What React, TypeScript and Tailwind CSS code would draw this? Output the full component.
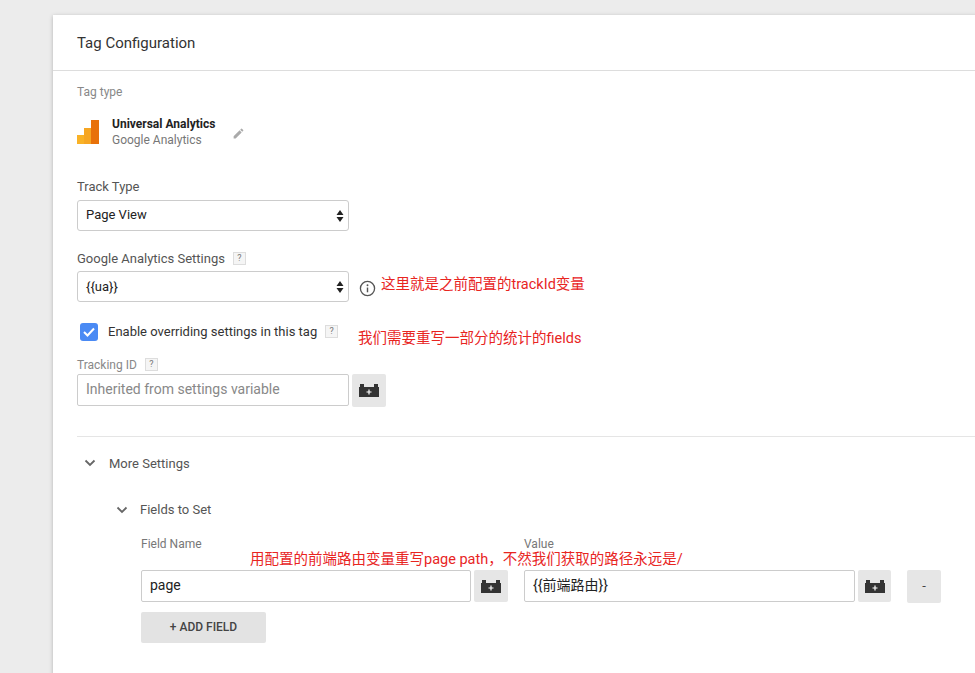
import React from "react";

const Q = () => (
  <span className="inline-flex items-center justify-center w-[13px] h-[13px] border border-[#ddd] bg-[#f5f5f5] text-[9px] leading-none text-[#777] ml-[8px]">?</span>
);

const Brick = ({ cls }: { cls: string }) => (
  <div className={"flex items-center justify-center bg-[#e6e6e6] rounded-[2px] " + cls}>
    <svg width="20" height="14" viewBox="0 0 20 14">
      <rect x="1" y="1" width="4" height="3" fill="#333" />
      <rect x="15" y="1" width="4" height="3" fill="#333" />
      <rect x="0" y="4" width="20" height="10" fill="#333" />
      <path d="M10 6.5v5M7.5 9h5" stroke="#fff" strokeWidth="1.2" />
    </svg>
  </div>
);

const Arrows = () => (
  <svg width="8" height="14" viewBox="0 0 8 14" className="absolute right-[4px] top-[8px]">
    <path d="M4 1L7.5 6H0.5Z M4 13L7.5 8H0.5Z" fill="#222" />
  </svg>
);

const Chevron = () => (
  <svg width="12" height="8" viewBox="0 0 12 8"><path d="M1.5 1.5L6 6l4.5-4.5" stroke="#666" strokeWidth="1.8" fill="none" /></svg>
);

export default function App() {
  return (
    <div className="w-[975px] h-[673px] overflow-hidden bg-[#ececec] relative" style={{ fontFamily: "Roboto, 'Noto Sans CJK SC', sans-serif" }}>
      <div className="absolute left-[53px] top-[15px] w-[960px] h-[700px] bg-white shadow-[0_1px_4px_rgba(0,0,0,0.25)]">
        <div className="h-[56px] border-b border-[#ddd] pl-[24px] pt-[17px] text-[15px] text-[#333]">Tag Configuration</div>
        <div className="pl-[24px]">
          <div className="pt-[12px] text-[12px] text-[#888]">Tag type</div>
          <div className="flex items-center mt-[15px]">
            <svg width="22" height="24" viewBox="0 0 22 24">
              <rect x="0" y="15" width="8" height="9" fill="#f9b227" />
              <rect x="7" y="8" width="8" height="16" fill="#f6a623" />
              <rect x="14" y="0" width="8" height="24" fill="#e8710a" />
            </svg>
            <div className="ml-[13px] leading-[16px]">
              <div className="text-[12px] font-bold text-[#222]">Universal Analytics</div>
              <div className="text-[12px] text-[#777]">Google Analytics</div>
            </div>
            <svg width="13" height="13" viewBox="0 0 24 24" className="ml-[17px] mt-[3px]">
              <path d="M3 17.25V21h3.75L17.81 9.94l-3.75-3.75L3 17.25zM20.71 7.04a1 1 0 000-1.41l-2.34-2.34a1 1 0 00-1.41 0l-1.83 1.83 3.75 3.75 1.83-1.83z" fill="#aaa" />
            </svg>
          </div>
          <div className="mt-[29px] text-[13px] text-[#555]">Track Type</div>
          <div className="relative mt-[3px] w-[272px] h-[31px] border border-[#ccc] rounded-[3px] pl-[8px] flex items-center text-[13px] text-[#222]">Page View<Arrows /></div>
          <div className="mt-[18px] text-[13px] text-[#555] flex items-center">Google Analytics Settings<Q /></div>
          <div className="flex items-center mt-[3px]">
            <div className="relative w-[272px] h-[31px] border border-[#ccc] rounded-[3px] pl-[8px] flex items-center text-[13px] text-[#222]">{"{{ua}}"}<Arrows /></div>
            <svg width="17" height="17" viewBox="0 0 18 18" className="ml-[10px] mt-[3px]">
              <circle cx="9" cy="9" r="7.5" stroke="#555" strokeWidth="1.4" fill="none" />
              <circle cx="9" cy="5.5" r="1" fill="#555" />
              <path d="M9 8v5" stroke="#555" strokeWidth="1.5" />
            </svg>
          </div>
          <div className="flex items-center mt-[20px] ml-[3px]">
            <div className="w-[18px] h-[18px] rounded-[3px] bg-[#4a8af4] flex items-center justify-center">
              <svg width="12" height="10" viewBox="0 0 12 10"><path d="M1 5l3.5 3.5L11 1.5" stroke="#fff" strokeWidth="2" fill="none" /></svg>
            </div>
            <span className="ml-[10px] text-[13px] text-[#333]">Enable overriding settings in this tag</span><Q />
          </div>
          <div className="mt-[14px] text-[12px] text-[#888] flex items-center">Tracking ID<Q /></div>
          <div className="flex mt-0">
            <div className="w-[272px] h-[32px] border border-[#ccc] rounded-[2px] pl-[8px] flex items-center text-[14px] text-[#888]">Inherited from settings variable</div>
            <Brick cls="ml-[3px] w-[34px] h-[33px]" />
          </div>
          <div className="mt-[29px] border-t border-[#e5e5e5]" />
          <div className="flex items-center mt-[17px] ml-[7px]"><Chevron /><span className="ml-[13px] text-[13px] text-[#555]">More Settings</span></div>
          <div className="flex items-center mt-[27px] ml-[39px]"><Chevron /><span className="ml-[12px] text-[13px] text-[#555]">Fields to Set</span></div>
          <div className="flex mt-[15px] ml-[64px] text-[12px] text-[#777]">
            <span className="w-[383px]">Field Name</span><span>Value</span>
          </div>
          <div className="flex mt-[17px] ml-[64px]">
            <div className="w-[330px] h-[32px] border border-[#ccc] rounded-[2px] pl-[8px] flex items-center text-[14px] text-[#222]">page</div>
            <Brick cls="ml-[3px] w-[34px] h-[32px]" />
            <div className="ml-[16px] w-[331px] h-[32px] border border-[#ccc] rounded-[2px] pl-[8px] flex items-center text-[14px] text-[#222]">{"{{前端路由}}"}</div>
            <Brick cls="ml-[3px] w-[33px] h-[32px]" />
            <div className="ml-[16px] w-[34px] h-[33px] bg-[#e6e6e6] rounded-[2px] flex items-center justify-center text-[13px] text-[#444]">-</div>
          </div>
          <div className="mt-[9px] ml-[64px] w-[125px] h-[31px] bg-[#e3e3e3] rounded-[2px] flex items-center justify-center text-[12px] font-medium text-[#444]">+ ADD FIELD</div>
        </div>
      </div>
      <div className="absolute left-[381px] top-[274px] text-[14.5px] text-[#e8251f]">这里就是之前配置的trackId变量</div>
      <div className="absolute left-[358px] top-[328px] text-[14.5px] text-[#e8251f]">我们需要重写一部分的统计的fields</div>
      <div className="absolute left-[250px] top-[549px] text-[14.5px] text-[#e8251f]">用配置的前端路由变量重写page path，不然我们获取的路径永远是/</div>
    </div>
  );
}
